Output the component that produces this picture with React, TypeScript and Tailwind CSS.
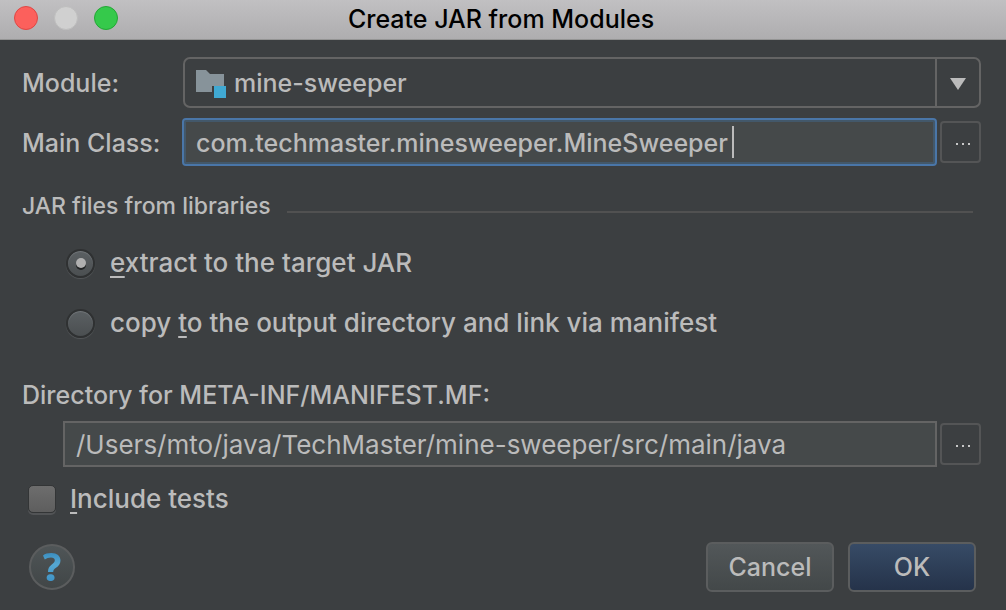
import { useState, type ReactNode } from "react";

function FolderIcon() {
  return (
    <svg width="32" height="32" viewBox="0 0 32 32" className="block" aria-hidden="true">
      <path d="M1 3h10l4 4h14v12H17v6H1z" fill="#87939a" />
      <rect x="19" y="19" width="12" height="12" fill="#40a9d3" />
    </svg>
  );
}

function BrowseButton({ label }: { label: string }) {
  return (
    <button
      type="button"
      aria-label={label}
      className="flex h-[42px] w-[41px] shrink-0 items-center justify-center rounded-[4px] border-2 border-[#545556] pl-1 pt-1"
    >
      <svg width="14" height="2" viewBox="0 0 14 2" fill="#c8c8c8" aria-hidden="true">
        <rect width="2" height="2" />
        <rect x="6" width="2" height="2" />
        <rect x="12" width="2" height="2" />
      </svg>
    </button>
  );
}

function Mnemonic({ children }: { children: ReactNode }) {
  return <span className="underline decoration-2 underline-offset-4 [text-decoration-skip-ink:none]">{children}</span>;
}

function Radio({ id, checked, onSelect, children }: { id: string; checked: boolean; onSelect: () => void; children: ReactNode }) {
  return (
    <div className="flex h-[60px] items-center gap-[15px]">
      <span className="grid shrink-0 place-items-center">
        <input
          id={id}
          type="radio"
          name="libraries"
          checked={checked}
          onChange={onSelect}
          className="col-start-1 row-start-1 h-[29px] w-[29px] appearance-none rounded-full border-2 border-[#2f3132] bg-linear-to-b from-[#5b6063] to-[#4b4f51] shadow-[0_1px_1px_#55585a,inset_0_1px_1px_#73777a]"
        />
        {checked && (
          <span className="pointer-events-none col-start-1 row-start-1 h-[10px] w-[10px] rounded-full bg-[#b0b0b0] shadow-[0_2px_0_#222425]" />
        )}
      </span>
      <label htmlFor={id}>{children}</label>
    </div>
  );
}

export default function App() {
  const [mode, setMode] = useState("extract");
  const [mainClass, setMainClass] = useState("com.techmaster.minesweeper.MineSweeper");
  const [directory, setDirectory] = useState("/Users/mto/java/TechMaster/mine-sweeper/src/main/java");

  return (
    <div className="flex min-h-screen flex-col bg-[#3c3f41] font-['Inter',sans-serif] text-[25px] font-medium leading-[30px] text-[#bbbbbb]">
      <header className="grid h-10 grid-cols-[1fr_auto_1fr] items-center border-b border-[#949494] bg-linear-to-b from-[#c1c0c2] to-[#aeadaf] pb-1 pr-1">
        <div className="flex gap-4 pl-[14px]">
          <button type="button" aria-label="Close" className="h-6 w-6 rounded-full border border-[#df4744] bg-[#fc605c]" />
          <button type="button" aria-label="Minimize" className="h-6 w-6 rounded-full border border-[#bebebe] bg-[#d0d0d0]" />
          <button type="button" aria-label="Zoom" className="h-6 w-6 rounded-full border border-[#23a735] bg-[#35c94b]" />
        </div>
        <h1 className="pt-0.5 text-black">Create JAR from Modules</h1>
      </header>

      <form className="flex flex-1 flex-col pl-[22px] pr-[25px] pt-[17px]" onSubmit={(e) => e.preventDefault()}>
        <div className="flex items-center">
          <label htmlFor="module" className="w-[161px] shrink-0">Module:</label>
          <div className="relative flex-1">
            <select
              id="module"
              className="block h-[51px] w-full appearance-none rounded-[7px] border-2 border-[#646464] bg-transparent pl-[49px] pr-12"
            >
              <option>mine-sweeper</option>
            </select>
            <span className="pointer-events-none absolute left-3 top-[10px]">
              <FolderIcon />
            </span>
            <span className="pointer-events-none absolute inset-y-0 right-0 flex w-[46px] items-center justify-center border-l-2 border-[#646464] pr-0.5 pt-0.5">
              <svg width="16" height="12" viewBox="0 0 16 12" aria-hidden="true">
                <path d="M0 0h16L8 12z" fill="#bbbbbb" />
              </svg>
            </span>
          </div>
        </div>

        <div className="mt-[10px] flex items-center">
          <label htmlFor="main-class" className="w-[160px] shrink-0 pt-0.5">Main Class:</label>
          <div className="relative mr-[3px] flex-1">
            <input
              id="main-class"
              value={mainClass}
              onChange={(e) => setMainClass(e.target.value)}
              className="block h-12 w-full rounded-[4px] border-2 border-[#4a76a8] bg-[#45494a] pl-3 pt-0.5 shadow-[inset_0_0_0_2px_#43586a] outline-none"
            />
            <span className="pointer-events-none absolute left-[550px] top-2 h-8 w-[2px] bg-[#bbbbbb]" />
          </div>
          <BrowseButton label="Browse main class" />
        </div>

        <fieldset className="mt-[25px]">
          <div className="flex items-center gap-4 pr-2 text-[23px]">
            <legend>JAR files from libraries</legend>
            <span className="mt-3 h-[2px] flex-1 bg-[#515151]" />
          </div>
          <div className="mt-3 pl-11 text-[26px]">
            <Radio id="extract" checked={mode === "extract"} onSelect={() => setMode("extract")}>
              <Mnemonic>e</Mnemonic>xtract to the target JAR
            </Radio>
            <Radio id="copy" checked={mode === "copy"} onSelect={() => setMode("copy")}>
              copy <Mnemonic>t</Mnemonic>o the output directory and link via manifest
            </Radio>
          </div>
        </fieldset>

        <label htmlFor="directory" className="mt-[27px]">Directory for META-INF/MANIFEST.MF:</label>
        <div className="mt-[11px] flex items-center gap-[3px] pl-[41px]">
          <input
            id="directory"
            value={directory}
            onChange={(e) => setDirectory(e.target.value)}
            className="h-[46px] min-w-0 flex-1 border-2 border-[#646464] bg-[#45494a] pl-[11px] text-[26px] font-normal outline-none"
          />
          <BrowseButton label="Browse directory" />
        </div>

        <div className="mt-[17px] flex items-center gap-[14px] pl-[6px] text-[26px]">
          <input
            id="tests"
            type="checkbox"
            className="h-7 w-7 shrink-0 appearance-none rounded-[5px] border border-[#333536] bg-linear-to-b from-[#6d6d6d] to-[#5e5e5e] shadow-[0_2px_0_#525456]"
          />
          <label htmlFor="tests"><Mnemonic>I</Mnemonic>nclude tests</label>
        </div>

        <div className="mt-7 flex items-center gap-[14px] pl-[7px] pr-[5px]">
          <button
            type="button"
            aria-label="Help"
            className="mr-auto flex h-[46px] w-[46px] items-center justify-center rounded-full border-2 border-[#5b5d5e] bg-linear-to-b from-[#4f5557] to-[#414647]"
          >
            <svg width="18" height="30" viewBox="0 0 18 30" aria-hidden="true">
              <defs>
                <linearGradient id="help" x1="0" y1="0" x2="0" y2="1">
                  <stop offset="0" stopColor="#3b8ec0" />
                  <stop offset="0.4" stopColor="#56a8d2" />
                  <stop offset="1" stopColor="#3f94c7" />
                </linearGradient>
              </defs>
              <path
                d="M0 3.5C2 1.7 5 1 8.300 1C14 1 17.500 4 17.500 8.500C17.500 12 15.500 14 13 15.800C10.800 17.400 10.300 18.200 10.200 20H5C5 16.500 6 14.800 8.500 12.700C10.700 11 11.800 10.200 11.800 8.300C11.800 6.300 10.300 5.500 8 5.500C5.500 5.500 3.500 6.300 1.800 7.500ZM7.600 22.300A3.400 3.400 0 1 1 7.600 29A3.400 3.400 0 1 1 7.600 22.300Z"
                fill="url(#help)"
              />
            </svg>
          </button>
          <button type="button" className="h-[50px] w-32 rounded-[6px] border-2 border-[#5b5d5e] bg-linear-to-b from-[#525759] to-[#434849]">Cancel</button>
          <button type="submit" className="h-[50px] w-32 rounded-[6px] border-2 border-[#5b5d5e] bg-linear-to-b from-[#374b66] to-[#25334a]">OK</button>
        </div>
      </form>
    </div>
  );
}
